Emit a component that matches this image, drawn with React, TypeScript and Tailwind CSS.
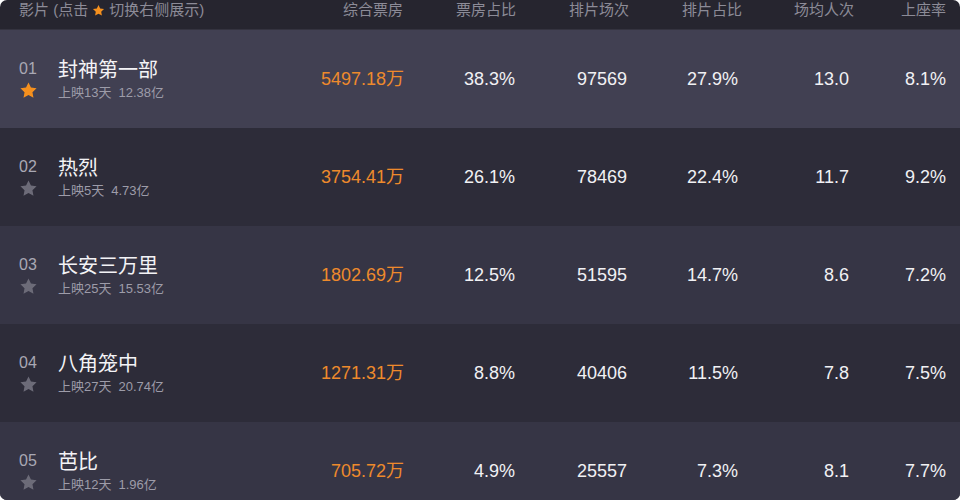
const font = { fontFamily: '"Liberation Sans", "Noto Sans CJK SC", sans-serif' };

type Movie = {
  rank: string;
  name: string;
  days: string;
  total: string;
  box: string;
  boxRate: string;
  shows: string;
  showRate: string;
  avgPeople: string;
  seatRate: string;
};

const movies: Movie[] = [
  { rank: "01", name: "封神第一部", days: "上映13天", total: "12.38亿", box: "5497.18万", boxRate: "38.3%", shows: "97569", showRate: "27.9%", avgPeople: "13.0", seatRate: "8.1%" },
  { rank: "02", name: "热烈", days: "上映5天", total: "4.73亿", box: "3754.41万", boxRate: "26.1%", shows: "78469", showRate: "22.4%", avgPeople: "11.7", seatRate: "9.2%" },
  { rank: "03", name: "长安三万里", days: "上映25天", total: "15.53亿", box: "1802.69万", boxRate: "12.5%", shows: "51595", showRate: "14.7%", avgPeople: "8.6", seatRate: "7.2%" },
  { rank: "04", name: "八角笼中", days: "上映27天", total: "20.74亿", box: "1271.31万", boxRate: "8.8%", shows: "40406", showRate: "11.5%", avgPeople: "7.8", seatRate: "7.5%" },
  { rank: "05", name: "芭比", days: "上映12天", total: "1.96亿", box: "705.72万", boxRate: "4.9%", shows: "25557", showRate: "7.3%", avgPeople: "8.1", seatRate: "7.7%" },
];

const rowBg = ["bg-[#414052]", "bg-[#2d2c39]", "bg-[#363545]", "bg-[#2d2c39]", "bg-[#363545]"];

function Star({ active, size }: { active: boolean; size: number }) {
  return (
    <svg width={size} height={size} viewBox="0 0 24 24" className="shrink-0">
      <path
        d="M12 1.8l3.1 6.5 7.1.9-5.2 4.9 1.3 7.1L12 17.8l-6.3 3.4 1.3-7.1-5.2-4.9 7.1-.9L12 1.8z"
        fill={active ? "#f5901e" : "#6c6b78"}
      />
    </svg>
  );
}

function MovieRow({ m, index }: { m: Movie; index: number }) {
  return (
    <div className={`flex h-[98px] items-center ${rowBg[index]}`}>
      <div className="flex w-[404px] items-center pl-[19px]">
        <div className="flex w-[18px] flex-col items-center">
          <span className="text-[16px] leading-[20px] text-[#a9a8b4]">{m.rank}</span>
          <div className="mt-[2px]">
            <Star active={index === 0} size={19} />
          </div>
        </div>
        <div className="ml-[21px] flex flex-col">
          <span className="text-[20px] leading-[26px] text-[#f3f3f6]">{m.name}</span>
          <span className="mt-[1px] text-[13px] leading-[18px] text-[#9d9ca9]">
            {m.days}
            <span className="ml-[7px]">{m.total}</span>
          </span>
        </div>
        <span className="ml-auto text-[18px] text-[#ee8a2c]">{m.box}</span>
      </div>
      <span className="w-[111px] text-right text-[18px] text-[#f1f1f4]">{m.boxRate}</span>
      <span className="w-[112px] text-right text-[18px] text-[#f1f1f4]">{m.shows}</span>
      <span className="w-[111px] text-right text-[18px] text-[#f1f1f4]">{m.showRate}</span>
      <span className="w-[111px] text-right text-[18px] text-[#f1f1f4]">{m.avgPeople}</span>
      <span className="w-[97px] text-right text-[18px] text-[#f1f1f4]">{m.seatRate}</span>
    </div>
  );
}

export default function App() {
  return (
    <div className="h-[500px] w-[960px] bg-white" style={font}>
      <div className="h-full w-full overflow-hidden rounded-[7px] bg-[#26252f]">
        <div className="flex h-[30px] items-start border-b border-[#34333f] text-[15px] leading-[19px] text-[#8c8b97]">
          <div className="flex w-[403px] items-center pl-[19px]">
            <span>影片 (点击</span>
            <span className="mx-[4px] mt-[1px]">
              <Star active size={13} />
            </span>
            <span>切换右侧展示)</span>
            <span className="ml-auto">综合票房</span>
          </div>
          <span className="w-[113px] text-right">票房占比</span>
          <span className="w-[113px] text-right">排片场次</span>
          <span className="w-[113px] text-right">排片占比</span>
          <span className="w-[112px] text-right">场均人次</span>
          <span className="w-[92px] text-right">上座率</span>
        </div>
        {movies.map((m, i) => (
          <MovieRow key={m.rank} m={m} index={i} />
        ))}
      </div>
    </div>
  );
}
